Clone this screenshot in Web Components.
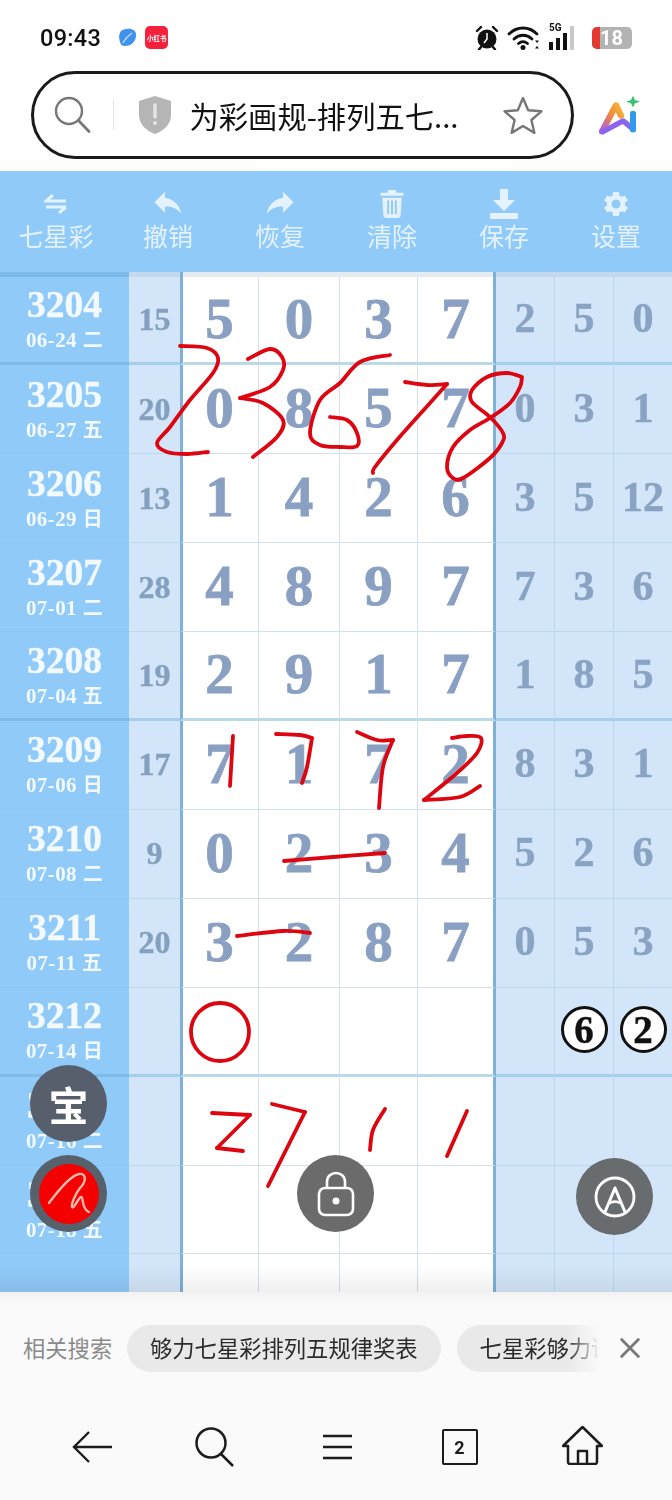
<!DOCTYPE html>
<html lang="zh">
<head>
<meta charset="utf-8">
<title>排列五七星彩规律</title>
<style>
  html, body { margin:0; padding:0; background:#fff; }
  body { width:672px; height:1500px; overflow:hidden; font-family:"Noto Sans CJK SC","Noto Sans",sans-serif; }
</style>
</head>
<body>
<z-phone-page></z-phone-page>

<script>
const SERIF = `"Liberation Serif","Noto Sans CJK SC",serif`;
const SANS = `"Noto Sans CJK SC","Noto Sans",sans-serif`;

class ZStatusBar extends HTMLElement {
  constructor() {
    super();
    this.attachShadow({ mode: "open" });
    this.shadowRoot.innerHTML = `
      <style>
        :host { display:flex; align-items:center; height:71px; padding:4px 40px 0 40px; box-sizing:border-box; background:#fff; }
        .time { font:500 23.500px Roboto,sans-serif; color:#111; letter-spacing:.3px; margin-right:17px; }
        .xhs { width:23px; height:23px; border-radius:5px; background:#f5203c; color:#fff; font:700 6.500px ${SANS}; display:flex; align-items:center; justify-content:center; margin-left:7px; white-space:nowrap; }
        .right { margin-left:auto; display:flex; align-items:center; }
        svg { display:block; }
        .sig { position:relative; width:30px; height:26px; margin:0 13px 0 8px; }
        .sig b { position:absolute; left:0; top:-3px; font:700 10px Roboto,sans-serif; color:#111; }
        .sig svg { position:absolute; left:0; top:0; }
        .bat { position:relative; width:40px; height:22px; border-radius:5px; overflow:hidden; background:#b3b3b3; color:#fff; font:700 20px Roboto,sans-serif; display:flex; align-items:center; justify-content:flex-end; padding-right:9px; box-sizing:border-box; }
        .bat i { position:absolute; left:0; top:0; bottom:0; width:8px; background:#e5392f; }
      </style>
      <span class="time">09:43</span>
      <svg width="20" height="22" viewBox="0 0 20 22"><path d="M3 4C9 0 19 1 18 9c-.5 6-5 10-11 10-1.500 0-3-.5-3.500-1C1 14 0 8 3 4z" fill="#3f93ee"/><path d="M5 16c2-4 5-7 9-10" stroke="#bcdcfb" stroke-width="1.500" fill="none"/></svg>
      <span class="xhs">小红书</span>
      <div class="right">
        <svg width="24" height="25" viewBox="0 0 24 25"><circle cx="12" cy="14" r="9.500" fill="#111"/><path d="M2 6 6 2M22 6l-4-4M6 22l-2 2.500M18 22l2 2.500" stroke="#111" stroke-width="2.400" stroke-linecap="round"/><path d="M12 8v6l-3 4" stroke="#fff" stroke-width="1.500" fill="none"/></svg>
        <svg width="34" height="26" viewBox="0 0 34 26" style="margin-left:8px"><g fill="none" stroke="#111" stroke-width="2.800" stroke-linecap="round"><path d="M2 9C10 1 22 1 30 9"/><path d="M7 14c5.500-5 12.500-5 18 0"/><path d="M11.500 18.500c3-2.500 6-2.500 9 0"/></g><circle cx="16" cy="22.500" r="2.500" fill="#111"/><path d="M28 15.500h4l-2 2.500zM28 23.500h4l-2-2.500z" fill="#111"/></svg>
        <div class="sig"><b>5G</b><svg width="30" height="26" viewBox="0 0 30 26"><rect x="0" y="17" width="4" height="8" fill="#111"/><rect x="7" y="13" width="4" height="12" fill="#111"/><rect x="14" y="8" width="4" height="17" fill="#111"/><rect x="21" y="1" width="4" height="24" fill="#c9c9c9"/></svg></div>
        <div class="bat"><i></i>18</div>
      </div>
    `;
  }
}
customElements.define("z-status-bar", ZStatusBar);

class ZAddressBar extends HTMLElement {
  constructor() {
    super();
    this.attachShadow({ mode: "open" });
    this.shadowRoot.innerHTML = `
      <style>
        :host { display:flex; align-items:center; height:100px; padding:0 0 12px 31px; box-sizing:border-box; background:linear-gradient(#fff 85%,#fffdf8); }
        .pill { width:543px; height:88px; box-sizing:border-box; border:3.500px solid #1a1a1a; border-radius:44px; display:flex; align-items:center; padding-left:20px; background:#fff; }
        .div { width:1px; height:30px; background:#e2e2e2; margin:0 23.500px 0 21px; }
        .title { font:400 29.300px ${SANS}; color:#111; margin-left:18px; white-space:nowrap; width:298px; flex:none; }
        .star { margin-left:15px; }
        .ai { margin-left:25px; }
        svg { display:block; flex:none; }
      </style>
      <div class="pill">
        <svg width="38" height="38" viewBox="0 0 38 38"><circle cx="15" cy="15" r="13" fill="none" stroke="#777" stroke-width="2.400"/><path d="M24.500 24.500 35 35.500" stroke="#777" stroke-width="2.800" stroke-linecap="round"/></svg>
        <span class="div"></span>
        <svg width="34" height="40" viewBox="0 0 34 40"><path d="M17 1 33 6v14c0 10-8 16-16 19C9 36 1 30 1 20V6z" fill="#b5b5b5"/><path d="M17 10v12" stroke="#e4e4e4" stroke-width="3.500" stroke-linecap="round"/><circle cx="17" cy="28" r="2" fill="#e4e4e4"/></svg>
        <span class="title">为彩画规-排列五七...</span>
        <svg class="star" width="40" height="38" viewBox="0 0 40 38"><path d="M20 2l5.200 12.200 13.200 1.100-10 8.700 3 12.900L20 30l-11.400 6.900 3-12.900-10-8.700 13.200-1.100z" fill="none" stroke="#777" stroke-width="2.400" stroke-linejoin="round"/></svg>
      </div>
      <svg class="ai" width="42" height="40" viewBox="0 0 42 48" preserveAspectRatio="none">
        <defs><linearGradient id="a" x1="0" y1="1" x2="1" y2="0"><stop offset="0" stop-color="#b05be8"/><stop offset=".55" stop-color="#f08a3c"/><stop offset="1" stop-color="#f7b733"/></linearGradient></defs>
        <path d="M3 44 17 12l5 13" fill="none" stroke="url(#a)" stroke-width="6.500" stroke-linecap="round" stroke-linejoin="round"/>
        <path d="M4 44 24 31l9 9" fill="none" stroke="#8a63ee" stroke-width="6" stroke-linecap="round" stroke-linejoin="round"/>
        <path d="M34 22v20" stroke="#2f9bf0" stroke-width="6" stroke-linecap="round"/>
        <path d="M34 1l2 5 5 2-5 2-2 5-2-5-5-2 5-2z" fill="#35c46f"/>
      </svg>
    `;
  }
}
customElements.define("z-address-bar", ZAddressBar);

class ZToolItem extends HTMLElement {
  constructor() {
    super();
    this.attachShadow({ mode: "open" });
    this.shadowRoot.innerHTML = `
      <style>
        :host { display:flex; flex-direction:column; align-items:center; color:#e4f2fe; font:400 25px ${SANS}; line-height:30px; }
        .ic { height:33px; display:flex; align-items:flex-end; justify-content:center; }
      </style>
      <div class="ic"><slot name="icon"></slot></div>
      <slot></slot>
    `;
  }
}
customElements.define("z-tool-item", ZToolItem);

class ZToolbar extends HTMLElement {
  constructor() {
    super();
    this.attachShadow({ mode: "open" });
    const fill = "#e4f2fe";
    this.shadowRoot.innerHTML = `
      <style>
        :host { display:grid; grid-template-columns:repeat(6,112px); height:101px; padding-top:16px; box-sizing:border-box; background:#90caf9; }
      </style>
      <z-tool-item>七星彩
        <svg slot="icon" style="margin-bottom:6px" width="24" height="20" viewBox="0 0 24 20"><path d="M9 1 2 7h20M22 13H2M22 13l-7 6" fill="none" stroke="${fill}" stroke-width="3"/></svg></z-tool-item>
      <z-tool-item>撤销
        <svg slot="icon" style="margin-bottom:4px" width="30" height="26" viewBox="2 4 20 17"><path d="M10 9V5l-7 7 7 7v-4.100c5 0 8.500 1.600 11 5.100-1-5-4-10-11-11z" fill="${fill}"/></svg></z-tool-item>
      <z-tool-item>恢复
        <svg slot="icon" style="margin-bottom:4px" width="30" height="26" viewBox="2 4 20 17"><path d="M14 9V5l7 7-7 7v-4.100c-5 0-8.500 1.600-11 5.100 1-5 4-10 11-11z" fill="${fill}"/></svg></z-tool-item>
      <z-tool-item>清除
        <svg slot="icon" style="margin-bottom:2px" width="26" height="29" viewBox="0 0 26 30"><path d="M9 1h8l1 3h7v3H1V4h7zM3 9h20l-1 18c0 1.500-1 3-3 3H7c-2 0-3-1.500-3-3zM8 12v14h2V12zm4 0v14h2V12zm4 0v14h2V12z" fill="${fill}" fill-rule="evenodd"/></svg></z-tool-item>
      <z-tool-item>保存
        <svg slot="icon" width="32" height="32" viewBox="0 0 32 32"><path d="M12 1h8v11h7L16 23 5 12h7zM2 25h28v6H2z" fill="${fill}"/></svg></z-tool-item>
      <z-tool-item>设置
        <svg slot="icon" style="margin-bottom:1px" width="30" height="30" viewBox="0 0 24 24"><path d="M19.140 12.940c.04-.3.06-.61.06-.94 0-.32-.02-.64-.07-.94l2.030-1.580a.49.49 0 0 0 .12-.61l-1.920-3.320a.488.488 0 0 0-.59-.22l-2.390.96c-.5-.38-1.030-.7-1.620-.94l-.36-2.540a.484.484 0 0 0-.48-.41h-3.840c-.24 0-.43.17-.47.41l-.36 2.540c-.59.24-1.130.57-1.620.94l-2.390-.96c-.22-.08-.47 0-.59.22L2.740 8.870c-.12.21-.08.47.12.61l2.030 1.580c-.05.3-.09.63-.09.94s.02.64.07.94l-2.030 1.580a.49.49 0 0 0-.12.61l1.920 3.320c.12.22.37.29.59.22l2.390-.96c.5.38 1.030.7 1.620.94l.36 2.540c.05.24.24.41.48.41h3.840c.24 0 .44-.17.47-.41l.36-2.540c.59-.24 1.130-.56 1.620-.94l2.390.96c.22.08.47 0 .59-.22l1.920-3.320c.12-.22.07-.47-.12-.61l-2.010-1.580zM12 15.600c-1.980 0-3.600-1.620-3.600-3.600s1.620-3.600 3.600-3.600 3.600 1.620 3.600 3.600-1.620 3.600-3.600 3.600z" fill="${fill}"/></svg></z-tool-item>
    `;
  }
}
customElements.define("z-toolbar", ZToolbar);

class ZDrawRow extends HTMLElement {
  constructor() {
    super();
    this.attachShadow({ mode: "open" });
  }
  connectedCallback() {
    const main = (this.getAttribute("main") || "   ").split(",");
    const side = (this.getAttribute("side") || "").split(",");
    const issue = this.getAttribute("issue") || "";
    const date = this.getAttribute("date") || "";
    const sum = this.getAttribute("sum") || "";
    const sideCell = v => v[0] === "o"
      ? `<div class="side"><span class="ring">${v.slice(1)}</span></div>`
      : `<div class="side">${v}</div>`;
    this.shadowRoot.innerHTML = `
      <style>
        :host { display:grid; grid-template-columns:129px 51px 79px 81px 78px 78px 59px 59px 58px; height:88.900px; box-sizing:border-box;
          --bw:1.500px; --l-no:#8ac5f5; --l-side:#bcd8ef; --l-main:#d5e0ea; font-family:${SERIF}; font-weight:700; }
        :host([thick]) { --bw:3px; --l-no:#7fbbe9; --l-side:#a3cfec; --l-main:#bcd9ea; }
        .no, .sum, .cell, .side { box-sizing:border-box; }
        .no { background:#90caf9; color:#f2f9ff; display:flex; flex-direction:column; align-items:center; justify-content:center; border-bottom:var(--bw) solid var(--l-no); }
        .no b { font-size:37.500px; line-height:38px; -webkit-text-stroke:.4px #f2f9ff; }
        .no small { font-size:21px; letter-spacing:.4px; line-height:26px; font-weight:700; white-space:nowrap; }
        .no small i { font:700 20px ${SANS}; }
        .sum { background:#d3e6f9; color:#84a0be; font-size:32px; -webkit-text-stroke:.4px #84a0be; display:flex; align-items:center; justify-content:center; border-bottom:var(--bw) solid var(--l-side); }
        .cell { background:#fff; color:#8aa0c2; font-size:57px; -webkit-text-stroke:.8px #8aa0c2; display:flex; align-items:center; justify-content:center; padding-bottom:3px; border-right:1.500px solid #d5e0ea; border-bottom:var(--bw) solid var(--l-main); }
        .cell.first { border-left:3px solid #7fb0d6; padding-right:2px; }
        .cell.last { border-right:3px solid #7fb0d6; }
        .side { background:#d3e6f9; color:#8aa3c3; font-size:42px; -webkit-text-stroke:.5px #8aa3c3; display:flex; align-items:center; justify-content:center; padding-bottom:3px; border-right:1px solid #bcd8ef; border-bottom:var(--bw) solid var(--l-side); }
        .side:last-child { border-right:0; }
        .ring { width:47px; height:47px; box-sizing:border-box; border-radius:50%; border:3px solid #111; background:#fff; color:#111; -webkit-text-stroke:.4px #111; display:flex; align-items:center; justify-content:center; font-size:39px; }
      </style>
      <div class="no"><b>${issue}</b><small>${date.replace(/(\S)$/, "<i>$1</i>")}</small></div>
      <div class="sum">${sum}</div>
      ${[0,1,2,3].map(i => `<div class="cell${i === 0 ? " first" : ""}${i === 3 ? " last" : ""}">${(main[i] || "").trim()}</div>`).join("")}
      ${[0,1,2].map(i => sideCell((side[i] || "").trim())).join("")}
    `;
  }
}
customElements.define("z-draw-row", ZDrawRow);

class ZFab extends HTMLElement {
  constructor() {
    super();
    this.attachShadow({ mode: "open" });
    this.shadowRoot.innerHTML = `
      <style>
        :host { position:absolute; width:77px; height:77px; border-radius:50%; background:var(--fab,#6b6b6b); color:#fff; display:flex; align-items:center; justify-content:center; font:700 40px ${SANS}; }
      </style>
      <slot></slot>
    `;
  }
}
customElements.define("z-fab", ZFab);

// hand written marks, points are in page coordinates
class ZInkLayer extends HTMLElement {
  constructor() {
    super();
    this.attachShadow({ mode: "open" });
    const strokes = [
      [[180,346],[207,348],[218,358],[213,373],[190,400],[170,427],[157,443],[167,452],[187,454],[208,452]],
      [[248,359],[270,349],[282,357],[283,370],[270,387],[240,398]],
      [[240,398],[263,403],[283,420],[277,437],[253,457]],
      [[390,355],[360,362],[340,383],[320,400],[310,433],[320,445],[340,447],[357,446],[357,433],[347,420],[330,417]],
      [[405,382],[427,385],[447,384]],
      [[447,384],[430,403],[397,440],[375,467],[373,473]],
      [[522,377],[507,373],[487,377],[472,390],[472,402],[490,417],[503,433],[502,443],[490,458],[463,478],[453,478],[447,467],[453,447],[470,430],[490,418],[510,403],[520,387],[522,377]],
      [[233,736],[230,786]],
      [[276,734],[300,735],[312,738]],
      [[312,738],[307,767],[302,783]],
      [[357,732],[377,740],[393,740]],
      [[393,740],[383,767],[379,808]],
      [[452,738],[467,736],[481,738],[477,753],[457,773],[424,800]],
      [[424,800],[460,797],[480,786]],
      [[284,861],[333,857],[385,853]],
      [[237,936],[283,931],[310,933]],
      [[212,1113],[250,1115]],
      [[250,1115],[217,1148]],
      [[217,1148],[243,1151]],
      [[272,1104],[305,1112]],
      [[305,1112],[268,1186]],
      [[385,1109],[373,1130],[370,1150]],
      [[467,1111],[447,1156]],
    ];
    this.shadowRoot.innerHTML = `
      <style>
        :host { position:absolute; inset:0; display:block; pointer-events:none; }
        svg { display:block; }
        path, circle { fill:none; stroke:#dd0510; stroke-width:3.800; stroke-linecap:round; stroke-linejoin:round; }
      </style>
      <svg width="672" height="1020" viewBox="0 272 672 1020">
        ${strokes.map(s => `<path d="${this._smooth(s)}"/>`).join("")}
        <circle cx="220" cy="1032" r="29"/>
      </svg>
    `;
  }

  // catmull-rom to bezier, so the marks don't look like polylines
  _smooth(p) {
    let d = `M${p[0][0]} ${p[0][1]}`;
    for (let i = 0; i < p.length - 1; i++) {
      const a = p[i - 1] || p[i], b = p[i], c = p[i + 1], e = p[i + 2] || c;
      d += `C${b[0] + (c[0] - a[0]) / 6} ${b[1] + (c[1] - a[1]) / 6} ${c[0] - (e[0] - b[0]) / 6} ${c[1] - (e[1] - b[1]) / 6} ${c[0]} ${c[1]}`;
    }
    return d;
  }
}
customElements.define("z-ink-layer", ZInkLayer);

class ZDrawTable extends HTMLElement {
  constructor() {
    super();
    this.attachShadow({ mode: "open" });
    this.shadowRoot.innerHTML = `
      <style>
        :host { display:block; position:relative; height:1020px; overflow:hidden; padding-top:4.600px; box-sizing:border-box;
          background:linear-gradient(90deg,#7db9e8 129px,#c5d9ec 129px,#c5d9ec 180px,#7fb0d6 180px,#7fb0d6 183px,#e4ebf1 183px,#e4ebf1 493px,#7fb0d6 493px,#7fb0d6 496px,#c5d9ec 496px); }
        .fade { position:absolute; left:0; right:0; bottom:0; height:26px; background:linear-gradient(#fff,#efefef); mix-blend-mode:multiply; pointer-events:none; }
        .lock { left:297px; top:883px; --fab:#6b6b6b; }
        .pen { left:576px; top:886px; --fab:#696c6f; }
        .bao { left:30px; top:793px; --fab:#565f6b; }
        .red { left:30px; top:883px; --fab:#56616c; }
        svg { display:block; }
      </style>
      <slot></slot>
      <div class="fade"></div>
      <z-ink-layer></z-ink-layer>
      <z-fab class="bao">宝</z-fab>
      <z-fab class="red">
        <svg width="60" height="60" viewBox="0 0 60 60"><circle cx="30" cy="30" r="30" fill="#f40000"/><path d="M10 39C16 31 30 12 40 10c8-1 7 8 1 14-5 6-9 17-8 19 2 2 7-10 9-10 3 0 0 12 8 15" fill="none" stroke="#ffb8a8" stroke-width="2.400" stroke-linecap="round" stroke-linejoin="round"/></svg>
      </z-fab>
      <z-fab class="lock">
        <svg width="38" height="46" viewBox="0 0 38 46"><rect x="2" y="17" width="34" height="27" rx="6" fill="none" stroke="#fff" stroke-width="2.600"/><path d="M10 17v-6c0-12 18-12 18 0v6" fill="none" stroke="#fff" stroke-width="2.600"/><circle cx="19" cy="30" r="3.500" fill="#fff"/></svg>
      </z-fab>
      <z-fab class="pen">
        <svg width="42" height="42" viewBox="0 0 42 42"><circle cx="21" cy="21" r="19" fill="none" stroke="#fff" stroke-width="2.800"/><path d="M11 36 21 12l10 24" fill="none" stroke="#fff" stroke-width="3" stroke-linejoin="round"/><path d="M15.500 27c4-2 7-2 11 0" fill="none" stroke="#fff" stroke-width="2.800"/></svg>
      </z-fab>
    `;
  }
}
customElements.define("z-draw-table", ZDrawTable);

class ZRelatedBar extends HTMLElement {
  constructor() {
    super();
    this.attachShadow({ mode: "open" });
    this.shadowRoot.innerHTML = `
      <style>
        :host { display:flex; align-items:center; height:112px; padding:0 0 0 23px; box-sizing:border-box; font:400 22.300px ${SANS}; color:#8a8a8a; position:relative; background:linear-gradient(#f2f2f2,#fafafa 12px); }
        .label { width:104px; flex:none; white-space:nowrap; padding-bottom:3px; }
        .chip { flex:none; height:47px; border-radius:24px; background:#e9e9e9; color:#2b2b2b; display:flex; align-items:center; padding:0 23px 3px; white-space:nowrap; box-sizing:border-box; }
        .scroll { display:flex; gap:16px; width:473px; overflow:hidden; flex:none;
          -webkit-mask-image:linear-gradient(90deg,#000 440px,transparent 473px); mask-image:linear-gradient(90deg,#000 440px,transparent 473px); }
        .x { margin-left:19px; display:block; }
      </style>
      <span class="label">相关搜索</span>
      <div class="scroll">
        <span class="chip">够力七星彩排列五规律奖表</span>
        <span class="chip">七星彩够力语音版</span>
      </div>
      <svg class="x" width="22" height="22" viewBox="0 0 24 24"><path d="M2 2l20 20M22 2 2 22" stroke="#777" stroke-width="3"/></svg>
    `;
  }
}
customElements.define("z-related-bar", ZRelatedBar);

class ZNavBar extends HTMLElement {
  constructor() {
    super();
    this.attachShadow({ mode: "open" });
    this.shadowRoot.innerHTML = `
      <style>
        :host { display:grid; grid-template-columns:repeat(5,122.500px); height:96px; padding:0 0 10px 30.750px; box-sizing:border-box; align-items:center; justify-items:center; background:#fafafa; }
        .b { width:36px; height:36px; border:2.500px solid #1c1c1c; border-radius:2px; box-sizing:border-box; display:flex; align-items:center; justify-content:center; font:700 18px Roboto,sans-serif; color:#1c1c1c; }
        svg { display:block; }
      </style>
      <svg width="40" height="32" viewBox="0 0 40 32"><path d="M40 16H2M17 1 2 16l15 15" fill="none" stroke="#1c1c1c" stroke-width="2.400"/></svg>
      <svg width="40" height="40" viewBox="0 0 40 40"><circle cx="16" cy="16" r="14.500" fill="none" stroke="#1c1c1c" stroke-width="2.500"/><path d="M26 27 38 39" stroke="#1c1c1c" stroke-width="2.500"/></svg>
      <svg width="29" height="26" viewBox="0 0 29 26"><path d="M0 2h29M0 13h29M0 24h29" stroke="#1c1c1c" stroke-width="2.500"/></svg>
      <div class="b">2</div>
      <svg width="41" height="39" viewBox="0 0 41 39" style="margin-top:-4px"><path d="M1 20 20.500 1 40 20h-5v16c0 1-1 2-2 2H8c-1 0-2-1-2-2V20zM16 38V25h9v13" fill="none" stroke="#1c1c1c" stroke-width="2.500" stroke-linejoin="round"/></svg>
    `;
  }
}
customElements.define("z-nav-bar", ZNavBar);

class ZPhonePage extends HTMLElement {
  constructor() {
    super();
    this.attachShadow({ mode: "open" });
    const rows = [
      ["3204","06-24 二","15","5,0,3,7","2,5,0",1],
      ["3205","06-27 五","20","0,8,5,7","0,3,1"],
      ["3206","06-29 日","13","1,4,2,6","3,5,12"],
      ["3207","07-01 二","28","4,8,9,7","7,3,6"],
      ["3208","07-04 五","19","2,9,1,7","1,8,5",1],
      ["3209","07-06 日","17","7,1,7,2","8,3,1"],
      ["3210","07-08 二","9","0,2,3,4","5,2,6"],
      ["3211","07-11 五","20","3,2,8,7","0,5,3"],
      ["3212","07-14 日","",",,,",",o6,o2",1],
      ["3213","07-16 二","",",,,",",,"],
      ["3214","07-18 五","",",,,",",,"],
      ["","","",",,,",",,"],
    ];
    this.shadowRoot.innerHTML = `
      <style>
        :host { display:flex; flex-direction:column; width:672px; height:1500px; background:#fafafa; overflow:hidden; }
      </style>
      <z-status-bar></z-status-bar>
      <z-address-bar></z-address-bar>
      <z-toolbar></z-toolbar>
      <z-draw-table>
        ${rows.map(r => `<z-draw-row issue="${r[0]}" date="${r[1]}" sum="${r[2]}" main="${r[3]}" side="${r[4]}"${r[5] ? " thick" : ""}></z-draw-row>`).join("")}
      </z-draw-table>
      <z-related-bar></z-related-bar>
      <z-nav-bar></z-nav-bar>
    `;
  }
}
customElements.define("z-phone-page", ZPhonePage);
</script>
</body>
</html>
